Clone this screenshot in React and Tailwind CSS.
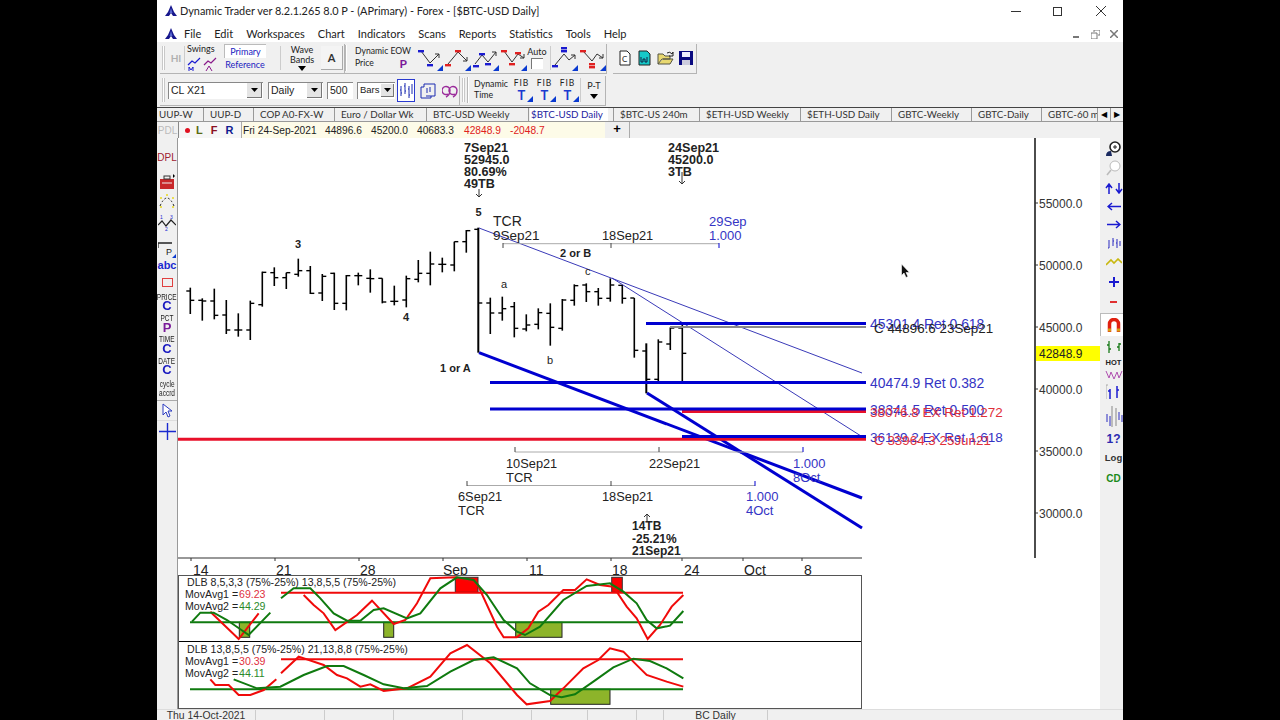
import React from "react";

const Y = (z) => 130 + z / 3;
const bars = [
  [473,552,483,511],[505,572,511,513],[476,568,513,556],[510,612,555,600],[550,620,600,600],[512,630,600,520],
  [425,530,524,427],[412,468,428,443],[428,477,443,428],[386,440,433,422],[408,492,422,490],[432,513,489,439],
  [428,540,430,520],[435,541,520,437],[428,466,437,437],[418,488,445,446],[445,520,445,516],[467,526,514,514],
  [437,532,510,446],[390,457,448,430],[365,466,430,402],[383,427,403,403],[335,424,405,335],[300,368,335,302],
  [293,668,298,519],[503,612,519,549],[500,572,549,536],[516,622,530,595],[553,604,597,585],[535,598,583,548],
  [520,647,550,592],[507,602,595,510],[463,527,511,467],[460,516,465,485],[474,527,485,505],[445,515,505,465],
  [465,521,466,505],[504,683,504,661],[640,790,663,748],[628,755,748,636],[592,660,642,594],[580,755,594,670],
];

const pts5 = (a, oy = 560) => a.map(([x, y]) => `${157 + x / 3},${oy + y / 3}`).join(" ");
const pts6 = (a, oy = 560) => a.map(([x, y]) => `${500 + x / 3},${oy + y / 3}`).join(" ");

const T = ({ x, y, s = 13, c = "#222", b, children, a }) => (
  <text x={x} y={y} fontSize={s} fill={c} fontWeight={b ? 700 : 400} textAnchor={a}>{children}</text>
);
const L = ({ x1, y1, x2, y2, c = "#000", w = 1 }) => <line x1={x1} y1={y1} x2={x2} y2={y2} stroke={c} strokeWidth={w} />;

function Chart() {
  const blue = "#0000d0";
  const lab = "#3434c4";
  return (
    <svg viewBox="178 138 922 437" className="w-[922px] h-[437px] block shrink-0 font-['Liberation_Sans',sans-serif]">
      {bars.map(([h, l, o, c], i) => {
        const x = 190.3 + 12 * i;
        const big = i === 24 || i === 38;
        return (
          <g key={i}>
            <L x1={x} y1={Y(h)} x2={x} y2={Y(l)} w={big ? 2 : 1.6} />
            <L x1={x - 4} y1={Y(o)} x2={x} y2={Y(o)} w={1.4} />
            <L x1={x} y1={Y(c)} x2={x + 4} y2={Y(c)} w={1.4} />
          </g>
        );
      })}
      <L x1={479} y1={228} x2={862} y2={373} c="#3a3ab8" w={1} />
      <L x1={612} y1={278} x2={861} y2={436} c="#3a3ab8" w={1} />
      <L x1={479} y1={352.7} x2={862} y2={498} c={blue} w={3} />
      <L x1={647} y1={393} x2={862} y2={528} c={blue} w={3} />
      <L x1={670} y1={327} x2={866} y2={327} c="#8a8a8a" w={2} />
      <L x1={646} y1={323.5} x2={866} y2={323.5} c={blue} w={3} />
      <L x1={490} y1={382.5} x2={866} y2={382.5} c={blue} w={3} />
      <L x1={682} y1={411.5} x2={866} y2={411.5} c="#e8102a" w={3} />
      <L x1={490} y1={409} x2={866} y2={409} c={blue} w={3} />
      <L x1={178} y1={439.3} x2={866} y2={439.3} c="#e8102a" w={3} />
      <L x1={682} y1={436.5} x2={866} y2={436.5} c={blue} w={3} />

      <L x1={503} y1={243.7} x2={719} y2={243.7} c="#aaa" />
      {[503, 611].map((x) => <L key={x} x1={x} y1={243} x2={x} y2={248} c="#444" />)}
      <L x1={719} y1={243} x2={719} y2={248} c={blue} />
      <L x1={515} y1={452} x2={803} y2={452} c="#aaa" />
      {[515, 659].map((x) => <L key={x} x1={x} y1={447} x2={x} y2={452} c="#444" />)}
      <L x1={803} y1={447} x2={803} y2={452} c={blue} />
      <L x1={467} y1={485.5} x2={755} y2={485.5} c="#aaa" />
      {[467, 611].map((x) => <L key={x} x1={x} y1={481} x2={x} y2={486} c="#444" />)}
      <L x1={755} y1={481} x2={755} y2={486} c={blue} />

      <T x={464} y={152} s={12.6} b>7Sep21</T><T x={464} y={164} s={12.6} b>52945.0</T><T x={464} y={176} s={12.6} b>80.69%</T><T x={464} y={188} s={12.6} b>49TB</T>
      <path d="M479 189v8m-3-3l3 3 3-3" fill="none" stroke="#333" />
      <T x={668} y={152} s={12.6} b>24Sep21</T><T x={668} y={164} s={12.6} b>45200.0</T><T x={668} y={176} s={12.6} b>3TB</T>
      <path d="M682 172v12m-3-3l3 3 3-3" fill="none" stroke="#333" />
      <T x={475.5} y={216} s={11} b>5</T><T x={295} y={248} s={11} b>3</T><T x={403} y={321} s={11} b>4</T>
      <T x={440} y={372} s={11} b>1 or A</T><T x={560} y={257} s={11} b>2 or B</T>
      <T x={585} y={275} s={11}>c</T><T x={501} y={288} s={11}>a</T><T x={547} y={364} s={11}>b</T>
      <T x={493} y={226} s={14}>TCR</T><T x={493} y={240} s={13.5}>9Sep21</T><T x={602} y={240} s={12.8}>18Sep21</T>
      <T x={709} y={226} c={lab}>29Sep</T><T x={709} y={240} c={lab}>1.000</T>
      <T x={506} y={467.5} s={12.8}>10Sep21</T><T x={506} y={482}>TCR</T><T x={649} y={467.5} s={12.8}>22Sep21</T>
      <T x={793} y={467.5} c={lab}>1.000</T><T x={793} y={482} c={lab}>8Oct</T>
      <T x={458} y={500.5} s={12.8}>6Sep21</T><T x={458} y={515}>TCR</T><T x={602} y={500.5} s={12.8}>18Sep21</T>
      <T x={746} y={500.5} c={lab}>1.000</T><T x={746} y={515} c={lab}>4Oct</T>
      <path d="M647 522v-8m-3 3l3-3 3 3" fill="none" stroke="#333" />
      <T x={632} y={530} s={12} b>14TB</T><T x={632} y={543} s={12} b>-25.21%</T><T x={632} y={555} s={12} b>21Sep21</T>

      <T x={870} y={329} s={13.9} c={lab}>45301.4 Ret 0.618</T>
      <T x={874} y={333} s={13.4} c="#222">C 44896.6 23Sep21</T>
      <T x={870} y={388} s={13.9} c={lab}>40474.9 Ret 0.382</T>
      <T x={870} y={415} s={13.9} c={lab}>38341.5 Ret 0.500</T>
      <T x={870} y={417} s={13.5} c="#e0303a">38076.8 EX Ret 1.272</T>
      <T x={870} y={442} s={13.5} c={lab}>36139.2 EX Ret 1.618</T>
      <T x={874} y={445} s={13.4} c="#e0303a">C 33964.3 25Jun21</T>

      <path d="M901.5 264V275.5L904 273 906 277.5 908 276.5 906 272.5H909.5Z" fill="#111" stroke="#fff" strokeWidth="0.6" />

      <L x1={1035} y1={138} x2={1035} y2={558} w={1.4} />
      {[[203, "55000.0"], [265, "50000.0"], [327, "45000.0"], [389, "40000.0"], [451, "35000.0"], [513, "30000.0"]].map(([y, t]) => (
        <g key={t}><L x1={1035} y1={y} x2={1038} y2={y} c="#333" /><T x={1039} y={y + 4.5} s={12} c="#333">{t}</T></g>
      ))}
      <rect x={1036} y={346} width={64} height={15} fill="#ffff00" />
      <T x={1039} y={358} s={12} c="#222">42848.9</T>

      <L x1={178} y1={558} x2={862} y2={558} c="#333" w={1.2} />
      {[191, 275, 359, 443, 527, 611, 682, 743, 802].map((x) => <L key={x} x1={x} y1={558} x2={x} y2={561} c="#333" />)}
      {[[193, "14"], [276, "21"], [360, "28"], [443, "Sep"], [529, "11"], [612, "18"], [684, "24"], [744, "Oct"], [804, "8"]].map(([x, t]) => (
        <T key={t} x={x} y={575} s={14} c="#222">{t}</T>
      ))}
    </svg>
  );
}

const RED = "#f00a0a";
const GRN = "#0f7a0f";
function Panel1() {
  return (
    <svg viewBox="179 576 682 65" className="w-[682px] h-[65px] block font-['Liberation_Sans',sans-serif]">
      <rect x={455.3} y={577.3} width={22.7} height={15} fill="#f00" stroke="#333" />
      <rect x={611.7} y={577.3} width={10.6} height={15} fill="#f00" stroke="#333" />
      <rect x={239.3} y={622.3} width={10.4} height={15} fill="#8db42a" stroke="#222" />
      <rect x={383.7} y={622.3} width={10} height={15} fill="#8db42a" stroke="#222" />
      <rect x={515.7} y={622.3} width={46.3} height={15} fill="#8db42a" stroke="#222" />
      <L x1={281} y1={592.7} x2={683} y2={592.7} c={RED} w={2} />
      <L x1={190} y1={622.3} x2={683} y2={622.3} c={GRN} w={2} />
      <g fill="none" strokeWidth="2">
        <polyline stroke={RED} points={pts5([[160,155],[245,237],[305,160]])} />
        <polyline stroke={RED} points={pts5([[440,105],[470,135],[500,160],[535,210],[600,165],[645,122],[710,192],[745,180],[780,130],[820,55],[895,52],[960,70],[1020,200],[1040,232],[1080,232]]) + " " + pts6([[50,232],[85,205],[115,155],[145,135],[190,90],[225,90],[260,58],[300,75],[340,80],[380,140],[410,175],[443,237],[480,195],[515,140],[550,105]])} />
        <polyline stroke={GRN} points={pts5([[105,185],[130,158],[170,158],[210,180],[275,225],[340,158]])} />
        <polyline stroke={GRN} points={pts5([[372,115],[410,85],[460,85],[490,115],[530,160],[570,182],[610,182],[650,150],[680,145],[750,175],[790,160],[850,85],[900,52],[950,60],[990,105],[1040,180],[1080,215]]) + " " + pts6([[75,225],[120,200],[190,120],[260,78],[330,70],[370,95],[410,130],[440,180],[470,205],[510,197],[550,153]])} />
      </g>
      <T x={187} y={586} s={10.6} c="#222">DLB 8,5,3,3 (75%-25%) 13,8,5,5 (75%-25%)</T>
      <T x={185} y={598} s={10.6} c="#222">MovAvg1 =</T><T x={239} y={598} s={10.6} c="#e03040">69.23</T>
      <T x={185} y={610} s={10.6} c="#222">MovAvg2 =</T><T x={239} y={610} s={10.6} c="#2a8a2a">44.29</T>
    </svg>
  );
}
function Panel2() {
  return (
    <svg viewBox="179 642 682 66" className="w-[682px] h-[66px] block font-['Liberation_Sans',sans-serif]">
      <rect x={550.7} y={689.3} width={59.3} height={15} fill="#8db42a" stroke="#222" />
      <L x1={281} y1={659.3} x2={683} y2={659.3} c={RED} w={2} />
      <L x1={190} y1={689.3} x2={683} y2={689.3} c={GRN} w={2} />
      <g fill="none" strokeWidth="2">
        <polyline stroke={RED} points={pts5([[160,358],[175,375],[215,375],[245,405],[280,405],[320,390],[358,358]])} />
        <polyline stroke={RED} points={pts5([[372,340],[425,290],[500,315],[540,345],[570,355],[610,380],[640,373],[680,393],[750,385],[820,350],[880,280],[930,255],[1000,310],[1080,405]]) + " " + pts6([[80,433],[150,423],[190,385],[250,325],[295,300],[330,265],[370,275],[405,310],[440,345],[500,365],[550,380]])} />
        <polyline stroke={GRN} points={pts5([[230,358],[300,385],[370,380],[440,345],[510,318],[560,318],[620,345],[680,373],[740,385],[810,378],[880,335],[950,300],[1010,292],[1080,325]]) + " " + pts6([[90,370],[150,405],[185,412],[225,403],[280,365],[340,322],[400,296],[450,303],[500,325],[550,355]])} />
      </g>
      <T x={187} y={653} s={10.6} c="#222">DLB 13,8,5,5 (75%-25%) 21,13,8,8 (75%-25%)</T>
      <T x={185} y={664.5} s={10.6} c="#222">MovAvg1 =</T><T x={239} y={664.5} s={10.6} c="#e03040">30.39</T>
      <T x={185} y={676.5} s={10.6} c="#222">MovAvg2 =</T><T x={239} y={676.5} s={10.6} c="#2a8a2a">44.11</T>
    </svg>
  );
}

const Logo = () => (
  <svg width="12" height="12" viewBox="0 0 12 12" className="shrink-0">
    <path d="M6 0L9 7 12 11H8L6 8 4 11H0L3 7Z" fill="#16168c" />
    <path d="M6 3L7.5 8H4.5Z" fill="#5a6ad0" />
  </svg>
);

const Zig = ({ points, extra }) => (
  <svg width="26" height="26" viewBox="0 0 26 26" className="shrink-0">
    <polyline points={points} fill="none" stroke="#333" strokeWidth="1" />
    {extra}
    <path d="M26 26V20L20 26Z" fill="#0a3ad0" />
  </svg>
);
const Dash = ({ x, y, c, w = 6 }) => <rect x={x} y={y} width={w} height={2.4} fill={c} />;

const Grip = () => <div className="w-[3px] h-[24px] mx-[2px] border-x border-[#c8c8c8] bg-white shrink-0" />;
const Sep = () => <div className="w-[2px] h-[26px] border-l border-[#b8b8b8] bg-white shrink-0" />;

const Arrow = ({ w = 15 }) => (
  <div className={w === 15 ? "w-[15px] h-[15px] bg-[#e4e4e4] border-r border-b border-[#777] flex items-center justify-center shrink-0" : "w-[13px] h-[13px] bg-[#e4e4e4] border-r border-b border-[#777] flex items-center justify-center shrink-0"}>
    <svg width="7" height="4" viewBox="0 0 7 4"><path d="M0 0H7L3.5 4Z" fill="#000" /></svg>
  </div>
);

function Toolbar1() {
  return (
    <div className="h-[33px] flex items-center pl-[3px] shrink-0 font-['Lato',sans-serif]">
      <div className="h-[30px] w-[185px] flex items-center border-r border-b border-[#b4b4b4] shrink-0">
        <Grip />
        <div className="w-[14px] text-center text-[10px] text-[#b0b0b0] font-bold ml-[2px]">HI</div>
        <div className="w-[1px] h-[24px] bg-[#ccc] ml-[1px]" />
        <div className="w-[32px] ml-[2px] flex flex-col leading-none shrink-0">
          <div className="text-[9px] text-[#222] h-[13px]">Swings</div>
          <svg width="30" height="15" viewBox="0 0 30 15">
            <path d="M1 8L5 4 8 6 13 1" fill="none" stroke="#1a1ad0" strokeWidth="1.2" />
            <path d="M2 14V10L4 13 6 10V14" fill="none" stroke="#1a1ad0" />
            <path d="M17 8L21 4 24 6 29 1" fill="none" stroke="#8a1a8a" strokeWidth="1.2" />
            <path d="M19 14L22 9 25 14" fill="none" stroke="#8a1a8a" />
          </svg>
        </div>
        <div className="w-[46px] ml-[3px] flex flex-col items-center shrink-0">
          <div className="h-[14px] w-[42px] bg-white border-t border-l border-[#bbb] text-[9px] leading-[13px] text-center text-[#2020c0]">Primary</div>
          <div className="h-[14px] text-[9px] leading-[14px] text-[#2020c0]">Reference</div>
        </div>
        <div className="w-[1px] h-[24px] bg-[#ccc] ml-[12px] shrink-0" />
        <div className="w-[30px] ml-[6px] flex flex-col items-center leading-none shrink-0">
          <div className="text-[9px] h-[9px] text-[#222]">Wave</div>
          <div className="text-[9px] h-[10px] mt-[1px] text-[#222]">Bands</div>
          <svg width="8" height="5" viewBox="0 0 8 5" className="mt-[1px]"><path d="M0 0H8L4 5Z" fill="#000" /></svg>
        </div>
        <div className="w-[22px] h-[24px] ml-[4px] bg-[#f4f4f4] border-r border-b border-[#aaa] text-center text-[11px] leading-[24px] font-bold text-[#333] shrink-0">A</div>
      </div>
      <div className="h-[30px] w-[262px] flex items-center border-r border-b border-[#b4b4b4] shrink-0">
        <Sep />
        <div className="w-[57px] ml-[8px] leading-none shrink-0 relative">
          <div className="text-[8.6px] text-[#222] whitespace-nowrap h-[11px]">Dynamic EOW</div>
          <div className="flex justify-between items-center pr-[5px]">
            <span className="text-[8.6px] text-[#222]">Price</span>
            <span className="text-[12px] font-bold text-[#7a1a9a]">P</span>
          </div>
        </div>
        <div className="ml-[5px] flex shrink-0 gap-[2px]">
          <Zig points="4,6 13,18 22,9" extra={<><Dash x={1} y={5} c="#1a1ad0" /><Dash x={10} y={19} c="#1a1ad0" /><path d="M18 9H22V13" fill="none" stroke="#333" /></>} />
          <Zig points="3,19 13,7 22,16" extra={<><Dash x={0} y={19} c="#e02020" /><Dash x={10} y={5} c="#e02020" /><path d="M18 16H22V12" fill="none" stroke="#333" /></>} />
          <Zig points="2,19 9,10 15,17 23,7" extra={<><Dash x={6} y={8} c="#1a1ad0" /><Dash x={12} y={18} c="#1a1ad0" /><Dash x={0} y={20} c="#1a1ad0" /><path d="M19 7H23V11" fill="none" stroke="#333" /></>} />
          <Zig points="3,6 11,17 17,9 23,13" extra={<><Dash x={0} y={5} c="#e02020" /><Dash x={8} y={18} c="#e02020" /><Dash x={14} y={7} c="#e02020" /><path d="M19 13H23V9" fill="none" stroke="#333" /></>} />
        </div>
        <div className="w-[20px] flex flex-col items-center leading-none shrink-0">
          <div className="text-[9px] text-[#222]">Auto</div>
          <div className="w-[12px] h-[11px] mt-[2px] bg-white border-l border-t border-[#777]" />
        </div>
        <div className="w-[1px] h-[24px] bg-[#ccc] ml-[3px] shrink-0" />
        <div className="flex ml-[1px] gap-[2px] shrink-0">
          <Zig points="3,20 12,9 17,15 23,10" extra={<><Dash x={9} y={2} c="#1a1ad0" /><Dash x={9} y={5} c="#1a1ad0" /><Dash x={0} y={20} c="#1a1ad0" /><path d="M19 10H23V14" fill="none" stroke="#333" /></>} />
          <Zig points="3,6 12,16 17,9 23,13" extra={<><Dash x={0} y={5} c="#e02020" /><Dash x={9} y={18} c="#e02020" /><Dash x={9} y={21} c="#e02020" /><path d="M19 13H23V9" fill="none" stroke="#333" /></>} />
        </div>
      </div>
      <div className="h-[30px] w-[84px] flex items-center border-r border-b border-[#b4b4b4] ml-[6px] pl-[4px] gap-[5px] shrink-0">
        <svg width="15" height="16" viewBox="0 0 15 16"><path d="M3 1H10L13 4V15H3Z" fill="#fff" stroke="#222" /><text x="5" y="12" fontSize="8" fill="#222">C</text></svg>
        <svg width="15" height="16" viewBox="0 0 15 16"><path d="M2 1H10L13 4V15H2Z" fill="#16c8c8" stroke="#222" /><path d="M4 7V12H6V9H8V12H10V7" fill="none" stroke="#124" /></svg>
        <svg width="17" height="14" viewBox="0 0 17 14"><path d="M1 13V3H6L8 5H13V8H5L1 13H13L16 8H6" fill="#e8d870" stroke="#554" /><path d="M10 2Q13 0 15 3L16 1V5H12" fill="none" stroke="#222" /></svg>
        <svg width="14" height="14" viewBox="0 0 14 14"><rect width="14" height="14" fill="#0a0a80" /><rect x="3" y="1" width="8" height="5" fill="#eef" /><rect x="3" y="9" width="8" height="5" fill="#ccd" /></svg>
      </div>
    </div>
  );
}

const Fib = () => (
  <div className="w-[23px] flex flex-col items-center leading-none shrink-0 relative">
    <div className="text-[8.5px] tracking-[1px] text-[#222] h-[10px]">FIB</div>
    <div className="text-[13px] font-bold text-[#1a3ad0] h-[13px] leading-[13px]">T</div>
    <svg width="6" height="6" viewBox="0 0 6 6" className="absolute right-0 bottom-0"><path d="M6 6V0L0 6Z" fill="#0a3ad0" /></svg>
  </div>
);

function Toolbar2() {
  return (
    <div className="h-[31px] flex items-center pl-[3px] shrink-0 font-['Lato',sans-serif]">
      <div className="h-[30px] w-[300px] flex items-center border-r border-b border-[#b4b4b4] shrink-0 font-['Liberation_Sans',sans-serif]">
        <Grip />
        <div className="ml-[1px] w-[95px] h-[17px] bg-white border-t border-l border-[#888] flex items-center justify-between pr-[1px] pl-[2px] text-[10.5px] text-[#222] shrink-0"><span>CL X21</span><Arrow /></div>
        <div className="ml-[5px] w-[55px] h-[17px] bg-white border-t border-l border-[#888] flex items-center justify-between pr-[1px] pl-[2px] text-[10.5px] text-[#222] shrink-0"><span>Daily</span><Arrow /></div>
        <div className="ml-[4px] w-[26px] h-[17px] bg-white border-t border-l border-[#888] pl-[2px] text-[10.5px] leading-[15px] text-[#222] shrink-0">500</div>
        <div className="ml-[4px] w-[38px] h-[17px] bg-white border-t border-l border-[#888] flex items-center justify-between pr-[1px] pl-[2px] text-[9.5px] text-[#222] shrink-0"><span>Bars</span><Arrow w={13} /></div>
        <div className="ml-[2px] w-[18px] h-[23px] border border-[#2a3ad0] bg-white flex items-center justify-center shrink-0">
          <svg width="14" height="17" viewBox="0 0 14 17"><path d="M2 4V14M1 8H2M2 11H3M6 1V12M5 4H6M6 9H7M10 4V16M9 7H10M10 13H11M13 2V12" stroke="#1a2ab0" fill="none" /></svg>
        </div>
        <svg width="20" height="20" viewBox="0 0 20 20" className="ml-[4px] shrink-0"><path d="M5 4H16V16H7M5 4V7H2V18H12V16" fill="none" stroke="#1a2ab0" /><path d="M8 8V13M11 7V12" stroke="#1a2ab0" /></svg>
        <svg width="18" height="16" viewBox="0 0 18 16" className="ml-[3px] shrink-0"><path d="M6 12A4 4 0 1 1 8 8Q8 13 4 15M13 12A4 4 0 1 1 15 8Q15 13 11 15" fill="none" stroke="#9a2a9a" strokeWidth="1.4" /></svg>
      </div>
      <div className="h-[30px] w-[146px] flex items-center border-r border-b border-[#b4b4b4] shrink-0">
        <Grip />
        <Sep />
        <div className="ml-[5px] w-[36px] leading-none shrink-0">
          <div className="text-[8.8px] text-[#222] h-[10px]">Dynamic</div>
          <div className="text-[8.8px] text-[#222] mt-[1px]">Time</div>
        </div>
        <Fib />
        <Fib />
        <Fib />
        <div className="w-[1px] h-[24px] bg-[#ccc] ml-[1px] shrink-0" />
        <div className="w-[22px] ml-[2px] flex flex-col items-center leading-none shrink-0">
          <div className="text-[9px] text-[#222]">P-T</div>
          <svg width="8" height="5" viewBox="0 0 8 5" className="mt-[4px]"><path d="M0 0H8L4 5Z" fill="#000" /></svg>
        </div>
      </div>
    </div>
  );
}

const tabs = [
  ["UUP-W", 47], ["UUP-D", 50], ["COP A0-FX-W", 81], ["Euro / Dollar Wk", 92], ["BTC-USD Weekly", 102],
  ["$BTC-USD Daily", 85, 1], ["$BTC-US 240m", 86], ["$ETH-USD Weekly", 101], ["$ETH-USD Daily", 91],
  ["GBTC-Weekly", 80], ["GBTC-Daily", 70], ["GBTC-60 min", 55],
];

function Tabs() {
  return (
    <div className="h-[15px] mt-[1px] flex border-t border-[#444] border-b border-b-[#999] shrink-0 overflow-hidden font-['Lato',sans-serif]">
      {tabs.map(([t, w, active], i) => (
        <div key={t} style={{ width: w }} className={i === 0 ? "h-full border-r border-[#999] shrink-0 overflow-hidden whitespace-nowrap text-[9.8px] leading-[13px] text-[#333] pl-[2px]" : i === 11 ? "h-full shrink-0 overflow-hidden whitespace-nowrap text-[9.8px] leading-[13px] text-[#333] pl-[6px]" : active ? "h-full border-r border-[#999] shrink-0 overflow-hidden whitespace-nowrap text-[9.8px] leading-[13px] text-[#333] pl-[1px]" : "h-full border-r border-[#999] shrink-0 overflow-hidden whitespace-nowrap text-[9.8px] leading-[13px] text-[#333] pl-[6px]"}>
          {active ? <span className="bg-white text-[#2222a0] inline-block w-[78px] h-[13px] pl-[1px]">{t}</span> : t}
        </div>
      ))}
      <div className="w-[13px] text-center text-[8px] leading-[13px] border-l border-[#999]">◀</div>
      <div className="w-[13px] text-center text-[8px] leading-[13px] border-l border-[#999]">▶</div>
      <div className="flex-1" />
    </div>
  );
}

function InfoRow() {
  return (
    <div className="h-[16px] flex shrink-0 text-[10.2px] leading-[15px]">
      <div className="w-[21px] text-center text-[#bbb] text-[10px] shrink-0 mt-[1px]">PDL</div>
      <div className="w-[63px] flex items-center border-l border-[#888] bg-[#f6f6f6] shrink-0 font-bold text-[11px]">
        <span className="ml-[6px] w-[5px] h-[5px] rounded-full bg-[#e01020]" />
        <span className="ml-[6px] text-[#5a6a10]">L</span>
        <span className="ml-[8px] text-[#8a1020]">F</span>
        <span className="ml-[8px] text-[#101a90]">R</span>
      </div>
      <div className="w-[364px] bg-[#fdfbe8] border-l border-[#aaa] shrink-0 flex items-center text-[#222]">
        <span className="ml-[1px] w-[82px] shrink-0">Fri 24-Sep-2021</span>
        <span className="w-[46px] shrink-0">44896.6</span>
        <span className="w-[46px] shrink-0">45200.0</span>
        <span className="w-[47px] shrink-0">40683.3</span>
        <span className="w-[46px] text-[#e02020] shrink-0">42848.9</span>
        <span className="text-[#e02020] shrink-0">-2048.7</span>
      </div>
      <div className="w-[25px] bg-[#efefef] border-r border-[#aaa] text-center font-bold text-[13px] shrink-0 leading-[14px]">+</div>
      <div className="flex-1" />
    </div>
  );
}

const Cell = ({ h, children, cls = "items-center" }) => (
  <div style={{ height: h }} className={`flex justify-center shrink-0 ${cls}`}>{children}</div>
);
const Tiny = ({ children }) => <span className="text-[9px] text-[#222] scale-x-[.72] leading-none inline-block whitespace-nowrap">{children}</span>;
const BigL = ({ c, children }) => <span className="text-[13px] font-bold leading-none -translate-y-[2px]" style={{ color: c }}>{children}</span>;

function LeftBar() {
  return (
    <div className="w-[21px] bg-[#f0f0f0] border-r border-[#999] flex flex-col shrink-0">
      <Cell h={12} />
      <Cell h={14}><span className="text-[10px] text-[#a02030]">DPL</span></Cell>
      <Cell h={26} cls="items-end">
        <svg width="16" height="16" viewBox="0 0 16 16"><rect x="1" y="5" width="14" height="10" fill="#c8282a" /><rect x="5" y="2" width="6" height="3" fill="none" stroke="#333" /><path d="M3 9H13" stroke="#eee" /><path d="M14 0L16 2 14 4Z" fill="#000" /></svg>
      </Cell>
      <Cell h={22}>
        <svg width="16" height="14" viewBox="0 0 16 14"><path d="M1 12Q8 -4 15 12" fill="none" stroke="#222" strokeDasharray="2 2" /><circle cx="2" cy="4" r="1" fill="#e8d820" /><circle cx="8" cy="1" r="1" fill="#e8d820" /><circle cx="14" cy="4" r="1" fill="#e8d820" /><circle cx="2" cy="13" r="1" fill="#e8d820" /><circle cx="14" cy="13" r="1" fill="#e8d820" /></svg>
      </Cell>
      <Cell h={20}>
        <svg width="18" height="17" viewBox="0 0 18 17"><path d="M0 11L4 7 8 12 13 6 18 11" fill="none" stroke="#222" strokeWidth="1.2" /><text x="2" y="5" fontSize="5" fill="#1a2ad0">1</text><text x="7" y="17" fontSize="5" fill="#1a2ad0">2</text><text x="12" y="5" fontSize="5" fill="#1a2ad0">3</text></svg>
      </Cell>
      <Cell h={26} cls="items-end">
        <svg width="18" height="16" viewBox="0 0 18 16"><path d="M0 6V1H14" fill="none" stroke="#222" strokeWidth="1.3" /><text x="8" y="13" fontSize="9" fill="#222">P</text><path d="M18 16V12L14 16Z" fill="#0a3ad0" /></svg>
      </Cell>
      <Cell h={14}><span className="text-[11px] font-bold text-[#1a2ad0] leading-none">abc</span></Cell>
      <Cell h={20}><div className="w-[11px] h-[9px] border border-[#e04040]" /></Cell>
      <Cell h={10}><Tiny>PRICE</Tiny></Cell>
      <Cell h={11}><BigL c="#1a1ac0">C</BigL></Cell>
      <Cell h={11}><Tiny>PCT</Tiny></Cell>
      <Cell h={10}><BigL c="#7a1a9a">P</BigL></Cell>
      <Cell h={11}><Tiny>TIME</Tiny></Cell>
      <Cell h={11}><BigL c="#1a1ac0">C</BigL></Cell>
      <Cell h={10}><Tiny>DATE</Tiny></Cell>
      <Cell h={11}><BigL c="#1a1ac0">C</BigL></Cell>
      <Cell h={3} />
      <Cell h={9}><Tiny>cycle</Tiny></Cell>
      <Cell h={9}><Tiny>accrd</Tiny></Cell>
      <div className="h-[1px] mt-[2px] bg-[#aaa] shrink-0" />
      <Cell h={19}>
        <svg width="11" height="15" viewBox="0 0 11 15"><path d="M1 1V12L4 9 6 14 8 13 6 8H10Z" fill="#fff" stroke="#2a3ac0" /></svg>
      </Cell>
      <div className="h-[1px] bg-[#ddd] shrink-0" />
      <Cell h={20}>
        <svg width="17" height="17" viewBox="0 0 17 17"><path d="M8.5 0V17M0 8.5H17" stroke="#1a2ad0" strokeWidth="1.4" /></svg>
      </Cell>
    </div>
  );
}

function RightBar() {
  return (
    <div className="w-[23px] bg-[#f0f0f0] flex flex-col shrink-0 pl-[4px]">
      <Cell h={19} cls="items-end">
        <svg width="17" height="16" viewBox="0 0 17 16"><circle cx="10" cy="6" r="5" fill="#fff" stroke="#222" strokeWidth="1.6" /><path d="M8 6H12M10 4V8" stroke="#222" /><path d="M1 15Q1 10 6 10L7 15Z" fill="#1a2a60" /></svg>
      </Cell>
      <Cell h={21}>
        <svg width="17" height="16" viewBox="0 0 17 16"><circle cx="10" cy="6" r="5" fill="#fff" stroke="#bbb" /><path d="M6 10L2 15" stroke="#bbb" strokeWidth="1.6" /></svg>
      </Cell>
      <Cell h={20}>
        <svg width="18" height="11" viewBox="0 0 18 11"><path d="M4 11V2M1 5L4 1 7 5M14 0V9M11 6L14 10 17 6" fill="none" stroke="#1a1ad0" strokeWidth="1.5" /></svg>
      </Cell>
      <Cell h={17}>
        <svg width="14" height="9" viewBox="0 0 14 9"><path d="M14 4.5H2M5 1L1 4.5 5 8" fill="none" stroke="#1a1ad0" strokeWidth="1.5" /></svg>
      </Cell>
      <Cell h={18}>
        <svg width="14" height="9" viewBox="0 0 14 9"><path d="M0 4.5H12M9 1L13 4.5 9 8" fill="none" stroke="#1a1ad0" strokeWidth="1.5" /></svg>
      </Cell>
      <Cell h={20}>
        <svg width="14" height="12" viewBox="0 0 14 12"><path d="M2 3V11M1 11H2M6 1V9M7 4H6M10 2V11M9 6H10M13 4V9" stroke="#2a2ac0" fill="none" /></svg>
      </Cell>
      <Cell h={18}>
        <svg width="16" height="8" viewBox="0 0 16 8"><path d="M0 7L5 2 8 5 12 1 16 5" fill="none" stroke="#c8b810" strokeWidth="1.6" /></svg>
      </Cell>
      <Cell h={22}>
        <svg width="10" height="10" viewBox="0 0 10 10"><path d="M5 0V10M0 5H10" stroke="#1a1ad0" strokeWidth="2" /></svg>
      </Cell>
      <Cell h={17}><div className="w-[7px] h-[2px] bg-[#e03030]" /></Cell>
      <div className="h-[23px] w-[23px] -ml-[4px] mt-[3px] bg-white border-t border-l border-[#bbb] flex justify-center items-center shrink-0 pl-[4px]">
        <svg width="14" height="15" viewBox="0 0 14 15"><path d="M2.5 14V6A4.5 4.5 0 0 1 11.5 6V14" fill="none" stroke="#e02010" strokeWidth="3.5" /><path d="M1 12H4M10 12H13" stroke="#d8a010" strokeWidth="3" /></svg>
      </div>
      <Cell h={21}>
        <svg width="16" height="14" viewBox="0 0 16 14"><path d="M3 1V13M1 5H3M3 9H5M13 3V11M11 7H13M13 4H15" stroke="#1a7a1a" strokeWidth="1.3" fill="none" /></svg>
      </Cell>
      <Cell h={12}><span className="text-[7.5px] font-bold leading-none text-[#222]">HOT</span></Cell>
      <Cell h={12}>
        <svg width="18" height="10" viewBox="0 0 18 10"><path d="M1 1L4 8 6 2 9 9 12 2 14 8 17 1" fill="none" stroke="#b050b0" /></svg>
      </Cell>
      <Cell h={22}>
        <svg width="16" height="16" viewBox="0 0 16 16"><path d="M0 1H2M0 1V15" stroke="#aaa" /><path d="M4 5V15M2 7H4M11 2V14M13 6H11" stroke="#1a1ad0" strokeWidth="1.5" /></svg>
      </Cell>
      <Cell h={28}>
        <svg width="18" height="22" viewBox="0 0 18 22"><path d="M7 0V21M11 2V20" stroke="#888" /><path d="M2 8V16M5 10V20M14 6V14M17 9V16" stroke="#2a2ac0" /></svg>
      </Cell>
      <Cell h={16}><span className="text-[12px] font-bold leading-none text-[#2a2ab0] whitespace-nowrap">1?</span></Cell>
      <Cell h={22}><span className="text-[9.5px] font-bold leading-none text-[#333]">Log</span></Cell>
      <Cell h={19}><span className="text-[10px] font-bold leading-none text-[#1a8a1a]">CD</span></Cell>
    </div>
  );
}

const statusCells = [99, 69, 69, 69, 69, 56, 49, 27, 104];

export default function App() {
  return (
    <div className="w-[1280px] h-[720px] bg-black flex justify-center overflow-hidden font-['Liberation_Sans',sans-serif]">
      <div className="w-[966px] h-[720px] flex flex-col bg-[#f0f0f0] blur-[0.35px]">
        <div className="h-[22px] bg-white flex items-center shrink-0 relative pl-[8px]">
          <Logo />
          <span className="ml-[3px] text-[10.9px] font-['Lato',sans-serif] text-[#222] whitespace-nowrap">Dynamic Trader ver 8.2.1.265 8.0 P - (APrimary) - Forex - [$BTC-USD Daily]</span>
          <div className="flex-1" />
          <div className="w-[10px] h-[1px] bg-[#333] mr-[32px]" />
          <div className="w-[9px] h-[9px] border border-[#333] mr-[34px]" />
          <svg width="10" height="10" viewBox="0 0 10 10" className="mr-[17px]"><path d="M0 0L10 10M10 0L0 10" stroke="#333" /></svg>
        </div>
        <div className="h-[20px] bg-white flex items-center shrink-0 pl-[8px] pt-[4px]">
          <Logo />
          <div className="ml-[7px] flex gap-[13px] text-[11px] font-['Lato',sans-serif] text-[#222]">
            {["File", "Edit", "Workspaces", "Chart", "Indicators", "Scans", "Reports", "Statistics", "Tools", "Help"].map((m) => <span key={m}>{m}</span>)}
          </div>
          <div className="flex-1" />
          <div className="w-[6px] h-[2px] bg-[#777] mt-[6px] mr-[12px]" />
          <svg width="9" height="9" viewBox="0 0 9 9" className="mr-[10px]"><path d="M3 2V0H9V5H7M0 3H6V9H0Z" fill="none" stroke="#777" /></svg>
          <svg width="8" height="8" viewBox="0 0 8 8" className="mr-[5px]"><path d="M0 0L8 8M8 0L0 8" stroke="#777" strokeWidth="1.5" /></svg>
        </div>
        <Toolbar1 />
        <Toolbar2 />
        <Tabs />
        <InfoRow />
        <div className="h-[571px] flex bg-white shrink-0">
          <LeftBar />
          <div className="w-[922px] flex flex-col shrink-0 bg-white">
            <Chart />
            <div className="w-[684px] border border-[#555] bg-white shrink-0">
              <Panel1 />
              <div className="h-[1px] bg-black" />
              <Panel2 />
            </div>
          </div>
          <RightBar />
        </div>
        <div className="flex-1 flex border-t border-[#ddd] text-[10.4px] leading-[11px] text-[#333] overflow-hidden">
          {statusCells.map((w, i) => (
            <div key={i} style={{ width: w }} className="border-r border-[#ccc] shrink-0 whitespace-nowrap text-center">
              {i === 0 ? "Thu 14-Oct-2021" : i === 8 ? "BC Daily" : ""}
            </div>
          ))}
        </div>
      </div>
    </div>
  );
}
